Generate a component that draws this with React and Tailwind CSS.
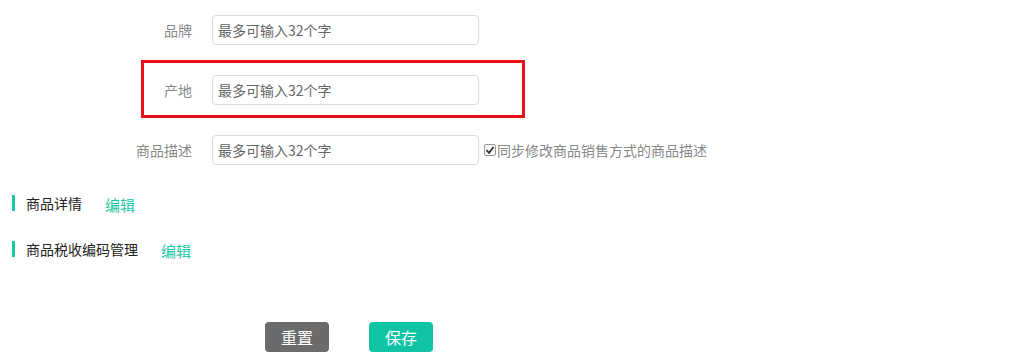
import React from 'react';

const font = { fontFamily: '"Noto Sans CJK SC", "Microsoft YaHei", sans-serif' };

const FieldRow = ({ label, children }) => (
  <div className="flex items-center h-[30px]">
    <label className="w-[192px] text-right text-[14px] text-[#888] pr-0 shrink-0">{label}</label>
    <input
      type="text"
      placeholder="最多可输入32个字"
      className="ml-[20px] w-[267px] h-[30px] border border-[#dcdcdc] rounded-[4px] px-[5px] text-[14px] text-[#555] placeholder:text-[#666] outline-none bg-white"
    />
    {children}
  </div>
);

const SectionTitle = ({ title }) => (
  <div className="flex items-center h-[16px] pl-[12px]">
    <span className="w-[3px] h-[16px] bg-[#1bc6a5]"></span>
    <span className="ml-[11px] text-[14px] text-[#222]">{title}</span>
    <button className="ml-[23px] text-[15px] text-[#1bc6a5] leading-none mt-[2px]">编辑</button>
  </div>
);

export default function App() {
  return (
    <div className="w-[1028px] h-[364px] bg-white relative" style={font}>
      <div className="flex flex-col gap-[30px] pt-[15px]">
        <FieldRow label="品牌" />
        <div className="relative">
          <FieldRow label="产地" />
          {/* annotation box */}
          <div className="absolute left-[141px] top-[-15px] w-[384px] h-[58px] border-[3px] border-[#e8141c] pointer-events-none"></div>
        </div>
        <FieldRow label="商品描述">
          <label className="flex items-center ml-[5px] text-[14px] text-[#888]">
            <span className="w-[12px] h-[12px] border border-[#999] rounded-[2px] bg-[#f4f4f4] flex items-center justify-center mr-[1px]">
              <svg width="10" height="10" viewBox="0 0 10 10">
                <path d="M1.5 5.2 L4 7.8 L8.6 2" fill="none" stroke="#333" strokeWidth="1.8" />
              </svg>
            </span>
            同步修改商品销售方式的商品描述
          </label>
        </FieldRow>
      </div>

      <div className="flex flex-col gap-[30px] mt-[30px]">
        <SectionTitle title="商品详情" />
        <SectionTitle title="商品税收编码管理" />
      </div>

      <div className="flex gap-[40px] pl-[265px] mt-[65px]">
        <button className="w-[64px] h-[30px] rounded-[4px] bg-[#6b6b6b] text-white text-[16px]">重置</button>
        <button className="w-[64px] h-[30px] rounded-[4px] bg-[#0ec4a5] text-white text-[16px]">保存</button>
      </div>
    </div>
  );
}
